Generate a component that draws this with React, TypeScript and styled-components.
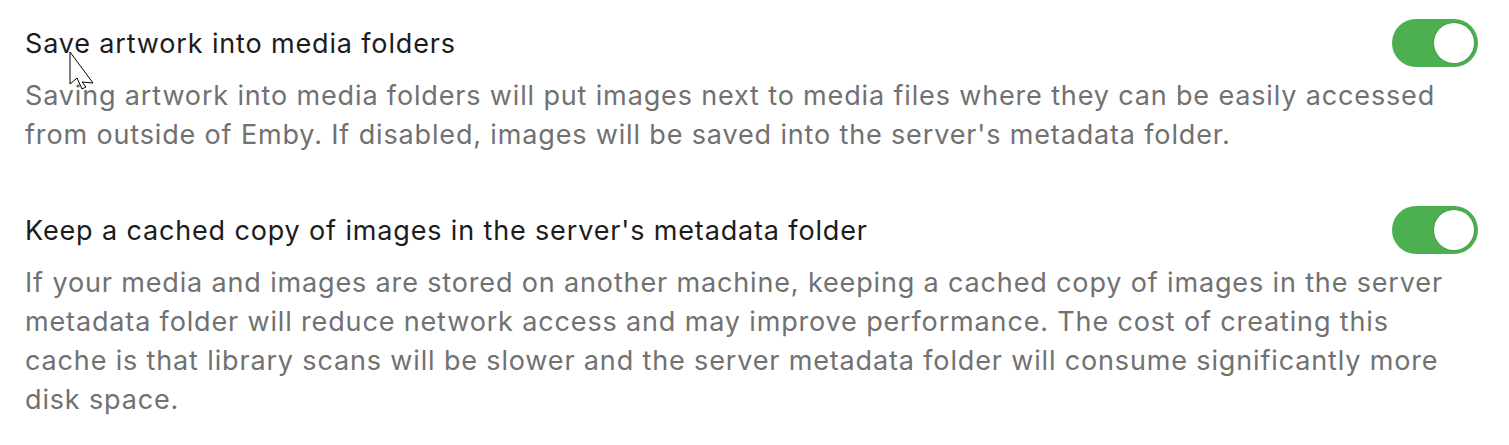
import React, { useState } from 'react';
import styled, { createGlobalStyle } from 'styled-components';

const GlobalStyle = createGlobalStyle`
  body {
    margin: 0;
    background: #fff;
    font-family: Inter, "Noto Sans", sans-serif;
  }
`;

const Page = styled.div`
  position: relative;
  display: flex;
  flex-direction: column;
  gap: 52px;
  padding: 19px 31px 0 25px;
`;

const Setting = styled.section`
  display: flex;
  flex-direction: column;
`;

const TitleRow = styled.div`
  display: flex;
  align-items: center;
  justify-content: space-between;
  height: 48px;
`;

const Title = styled.label`
  font-size: 27px;
  letter-spacing: 0.85px;
  color: #1c1c1c;
`;

const Description = styled.p`
  margin: 9px 0 0;
  max-width: 1432px;
  font-size: 27px;
  letter-spacing: 0.85px;
  line-height: 39px;
  color: #717171;
`;

const Switch = styled.button<{ on: boolean }>`
  position: relative;
  flex: none;
  width: 86px;
  height: 48px;
  border: none;
  border-radius: 24px;
  padding: 0;
  background: ${({ on }) => (on ? '#4caf50' : '#bdbdbd')};
  cursor: pointer;

  &::after {
    content: '';
    position: absolute;
    top: 4px;
    left: ${({ on }) => (on ? '42px' : '4px')};
    width: 40px;
    height: 40px;
    border-radius: 50%;
    background: #fff;
    box-shadow: 0 0 2px rgba(0, 0, 0, 0.25);
  }
`;

const Pointer = styled.svg`
  position: absolute;
  left: 69px;
  top: 51px;
  pointer-events: none;
`;

const settings = [
  {
    id: 'saveLocal',
    title: 'Save artwork into media folders',
    text: "Saving artwork into media folders will put images next to media files where they can be easily accessed from outside of Emby. If disabled, images will be saved into the server's metadata folder.",
  },
  {
    id: 'cacheImages',
    title: "Keep a cached copy of images in the server's metadata folder",
    text: 'If your media and images are stored on another machine, keeping a cached copy of images in the server metadata folder will reduce network access and may improve performance. The cost of creating this cache is that library scans will be slower and the server metadata folder will consume significantly more disk space.',
  },
];

const App: React.FC = () => {
  const [values, setValues] = useState<Record<string, boolean>>({
    saveLocal: true,
    cacheImages: true,
  });

  return (
    <>
      <GlobalStyle />
      <Page>
        {settings.map((s) => (
          <Setting key={s.id}>
            <TitleRow>
              <Title>{s.title}</Title>
              <Switch
                on={values[s.id]}
                onClick={() => setValues({ ...values, [s.id]: !values[s.id] })}
              />
            </TitleRow>
            <Description>{s.text}</Description>
          </Setting>
        ))}
        <Pointer width="26" height="40" viewBox="-1 -1 26 40">
          <path
            d="M0 0 V32 L7 26 L12 37 L16 35 L12 30 L23 31 Z"
            fill="#fff"
            stroke="#000"
            strokeWidth="1"
            strokeLinejoin="miter"
          />
        </Pointer>
      </Page>
    </>
  );
};

export default App;
